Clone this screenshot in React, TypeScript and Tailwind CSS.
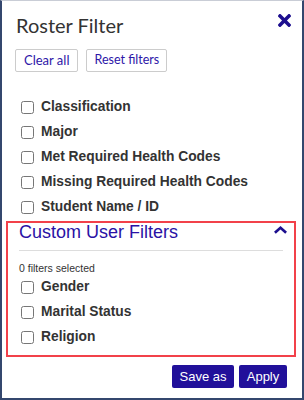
import { FaTimes } from 'react-icons/fa';

const mainFilters = ['Classification', 'Major', 'Met Required Health Codes', 'Missing Required Health Codes', 'Student Name / ID'];
const customFilters = ['Gender', 'Marital Status', 'Religion'];

function FilterRow({ label, inset }: { label: string; inset?: boolean }) {
  return (
    <label className={`flex items-center h-[25px] gap-[7px] ${inset ? 'pl-[13px]' : 'pl-[19px]'}`}>
      <input type="checkbox" className="w-[13px] h-[13px] m-0 shrink-0" />
      <span className="text-[13.8px] font-bold text-[#333]">{label}</span>
    </label>
  );
}

function ChevronUp() {
  return (
    <svg width="13" height="8" viewBox="0 0 13 8" className="text-[#1d0f8f]">
      <path d="M6.5 0 L13 5.8 L11.2 7.8 L6.5 3.6 L1.8 7.8 L0 5.8 Z" fill="currentColor" />
    </svg>
  );
}

export default function App() {
  return (
    <div className="w-[304px] h-[400px] bg-white border-t border-t-[#c9cdd6] border-x-2 border-b-2 border-x-[#34476e] border-b-[#34476e] flex flex-col font-['Liberation_Sans',Arial,sans-serif]">
      <div className="flex items-start justify-between pl-[14px] pr-[8px] pt-[12px]">
        <h1 className="text-[20px] leading-[24px] text-[#333] font-['Lato',sans-serif]">Roster Filter</h1>
        <button className="text-[#1d0f8f] -mt-[2px]">
          <FaTimes size={19} />
        </button>
      </div>

      <div className="flex gap-[8px] pl-[13px] mt-[12px]">
        <button className="h-[23px] px-[8px] border border-[#ccc] rounded-[2px] text-[13px] text-[#2d16a8] font-['Lato',sans-serif]">
          Clear all
        </button>
        <button className="h-[23px] px-[7px] border border-[#ccc] rounded-[2px] text-[12.5px] text-[#2d16a8] font-['Lato',sans-serif]">
          Reset filters
        </button>
      </div>

      <div className="mt-[23px]">
        {mainFilters.map((f) => (
          <FilterRow key={f} label={f} />
        ))}
      </div>

      <div className="mt-[1px] ml-[4px] mr-[6px] border-2 border-[#f2414a] pb-[5px]">
        <div className="flex items-center justify-between pl-[11px] pr-[7px] h-[20px] -mt-[1px]">
          <span className="text-[18px] leading-[20px] text-[#2a11a5]">Custom User Filters</span>
          <span className="-mt-[4px] flex">
            <ChevronUp />
          </span>
        </div>
        <div className="mx-[11px] mt-[8px] border-t border-[#ddd]" />
        <div className="pl-[11px] mt-[11px] text-[10.5px] leading-[12px] text-[#333]">0 filters selected</div>
        <div className="mt-[1px]">
          {customFilters.map((f) => (
            <FilterRow key={f} label={f} inset />
          ))}
        </div>
      </div>

      <div className="flex justify-end gap-[5px] pr-[15px] mt-[8px]">
        <button className="h-[23px] w-[62px] bg-[#21109a] rounded-[2px] text-white text-[13px]">Save as</button>
        <button className="h-[23px] w-[48px] bg-[#21109a] rounded-[2px] text-white text-[13px]">Apply</button>
      </div>
    </div>
  );
}
